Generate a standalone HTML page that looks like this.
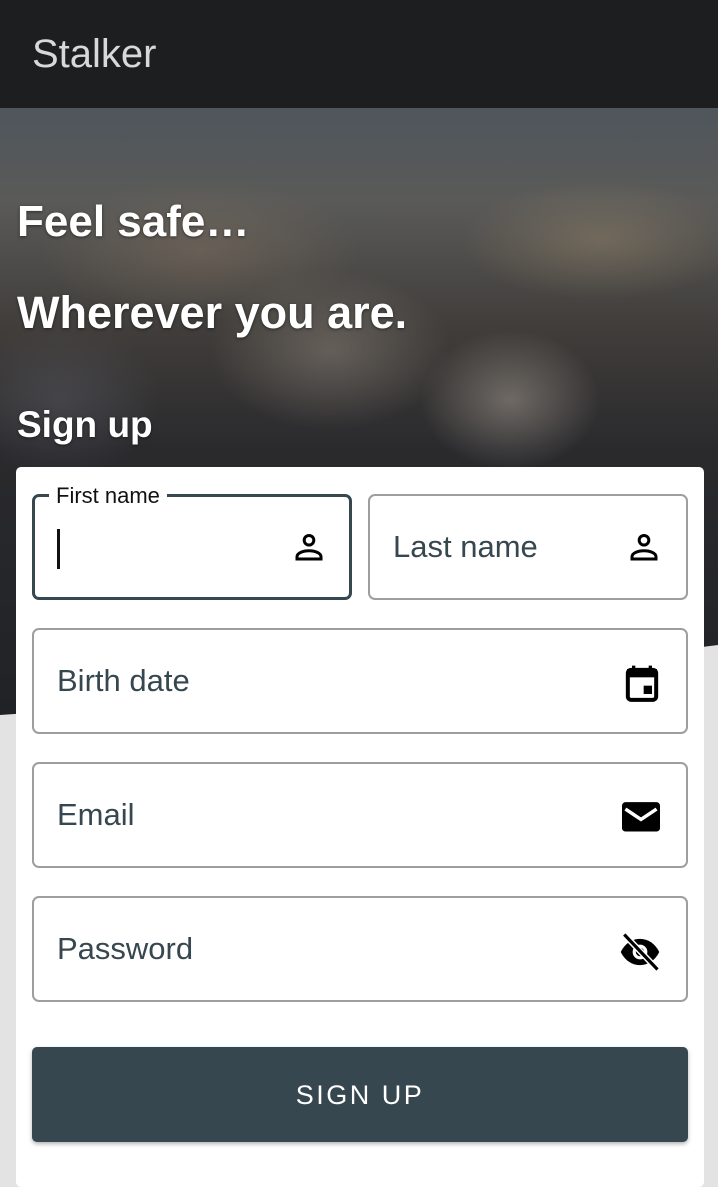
<!DOCTYPE html>
<html><head><style>
*{box-sizing:border-box;margin:0;padding:0}
body{width:718px;height:1156px;overflow:hidden;background:#e3e3e3;font-family:"Liberation Sans",Roboto,sans-serif;position:relative}
.photo{position:absolute;left:0;top:0;width:718px;height:720px;
background:
radial-gradient(ellipse 120px 80px at 330px 350px,rgba(150,140,130,.45),transparent),
radial-gradient(ellipse 90px 70px at 510px 400px,rgba(170,160,150,.5),transparent),
radial-gradient(ellipse 140px 60px at 600px 240px,rgba(160,140,110,.4),transparent),
radial-gradient(ellipse 160px 70px at 200px 250px,rgba(140,120,100,.4),transparent),
radial-gradient(ellipse 100px 80px at 60px 400px,rgba(90,90,100,.45),transparent),
linear-gradient(180deg,#4f565c 110px,#5a5a58 200px,#403d3a 330px,#2a2a2d 450px,#202226 720px);
clip-path:polygon(0 0,718px 0,718px 645px,360px 690px,0 715px)}
.bar{position:absolute;left:0;top:0;width:718px;height:108px;background:rgba(20,20,20,.85)}
.bar span{position:absolute;left:32px;top:32px;font-size:40px;color:#d8d8d8}
.h{position:absolute;left:17px;color:#fff;font-weight:bold;font-size:44px;text-shadow:0 1px 3px rgba(0,0,0,.5)}
.card{position:absolute;left:16px;top:467px;width:688px;height:720px;background:#fff;border-radius:5px}
.f{position:absolute;border:2px solid #9e9e9e;border-radius:7px;height:106px}
.f span{position:absolute;left:23px;top:33px;font-size:31px;color:#37474f}
.f svg{position:absolute;right:24px;top:33px}
.btn{position:absolute;left:32px;top:1047px;width:656px;height:95px;background:#37474f;border-radius:5px;color:#fff;font-size:27px;letter-spacing:2.5px;text-align:center;line-height:97px;box-shadow:0 2px 4px rgba(0,0,0,.3)}
</style></head><body>
<div class="photo"></div>
<div class="bar"><span>Stalker</span></div>
<div class="h" style="top:197px">Feel safe…</div>
<div class="h" style="top:287px;font-size:45px">Wherever you are.</div>
<div class="h" style="top:404px;font-size:37px">Sign up</div>
<div class="card"></div>
<div class="f" style="left:32px;top:494px;width:320px;border:3px solid #37474f">
<div style="position:absolute;left:14px;top:-14px;background:#fff;padding:0 7px;font-size:22px;color:#111">First name</div>
<div style="position:absolute;left:22px;top:32px;width:3px;height:40px;background:#111"></div>
<svg width="36" height="36" viewBox="0 0 24 24" style="right:22px;top:32px"><circle cx="12" cy="7.5" r="3.2" fill="none" stroke="#000" stroke-width="2"/><path d="M4 20v-1.5c0-2.5 4-4 8-4s8 1.5 8 4V20z" fill="none" stroke="#000" stroke-width="2"/></svg></div>
<div class="f" style="left:368px;top:494px;width:320px"><span>Last name</span>
<svg width="36" height="36" viewBox="0 0 24 24"><circle cx="12" cy="7.5" r="3.2" fill="none" stroke="#000" stroke-width="2"/><path d="M4 20v-1.5c0-2.5 4-4 8-4s8 1.5 8 4V20z" fill="none" stroke="#000" stroke-width="2"/></svg></div>
<div class="f" style="left:32px;top:628px;width:656px"><span>Birth date</span>
<svg width="40" height="42" viewBox="0 0 24 24"><path d="M7 1v3M17 1v3" stroke="#000" stroke-width="2"/><rect x="3.5" y="3.5" width="17" height="18" rx="2" fill="none" stroke="#000" stroke-width="2.4"/><rect x="3" y="3" width="18" height="5" fill="#000"/><rect x="13" y="13" width="5" height="5" fill="#000"/></svg></div>
<div class="f" style="left:32px;top:762px;width:656px"><span>Email</span>
<svg width="42" height="38" viewBox="0 0 24 22"><rect x="1" y="3" width="22" height="17" rx="2" fill="#000"/><path d="M3 7l9 6 9-6" fill="none" stroke="#fff" stroke-width="2"/></svg></div>
<div class="f" style="left:32px;top:896px;width:656px"><span>Password</span>
<svg width="44" height="42" viewBox="0 0 24 24"><path d="M1 12c2.5-5 6.5-7.5 11-7.5S20.5 7 23 12c-2.5 5-6.5 7.5-11 7.5S3.5 17 1 12z" fill="#000"/><circle cx="12" cy="12" r="3.3" fill="none" stroke="#fff" stroke-width="1.8"/><path d="M3 2l19 20" stroke="#fff" stroke-width="3.5"/><path d="M3 2l19 20" stroke="#000" stroke-width="1.8"/></svg></div>
<div class="btn">SIGN UP</div>
</body></html>
